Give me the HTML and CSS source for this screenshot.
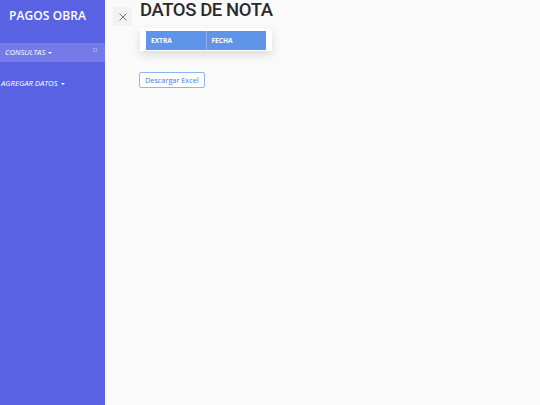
FILE: index.html
```html
<!DOCTYPE html>
<html>
<head>
<meta charset="utf-8">
<link rel="stylesheet" href="styles.css">
</head>
<body>
<div class="app">
  <aside class="sidebar">
    <div class="brand">PAGOS OBRA</div>
    <div class="nav-item active">CONSULTAS <span class="caret"></span><span class="dot"></span></div>
    <div class="nav-item second">AGREGAR DATOS <span class="caret"></span></div>
  </aside>
  <main class="content">
    <div class="close"><svg width="8" height="8" viewBox="0 0 8 8"><path d="M0.5 0.5L7.5 7.5M7.5 0.5L0.5 7.5" stroke="#666" stroke-width="0.9" fill="none"/></svg></div>
    <div class="body">
      <h1 class="title">DATOS DE NOTA</h1>
      <div class="card">
        <table class="tbl">
          <thead><tr><th>EXTRA</th><th>FECHA</th></tr></thead>
        </table>
      </div>
      <button class="btn">Descargar Excel</button>
    </div>
  </main>
</div>
</body>
</html>
```
FILE: styles.css
```css
* { box-sizing: border-box; }
html, body { margin: 0; height: 100%; }
body { font-family: "Open Sans", "DejaVu Sans", sans-serif; background: #fafafa; }
.app { display: flex; height: 405px; }
.sidebar { width: 105px; background: #5a62e4; color: #fff; flex-shrink: 0; }
.brand { font-size: 12px; font-weight: 600; padding: 7px 0 0 9px; height: 43px; letter-spacing: 0.1px; }
.nav-item { font-size: 7.7px; font-style: italic; position: relative; }
.nav-item.active { background: rgba(255,255,255,0.16); height: 19px; line-height: 19px; padding-left: 5px; }
.nav-item.second { padding-left: 1px; margin-top: 14px; line-height: 14px; }
.caret { display: inline-block; width: 0; height: 0; border-left: 2px solid transparent; border-right: 2px solid transparent; border-top: 2.5px solid #fff; vertical-align: middle; margin-left: 1px; }
.dot { position: absolute; right: 8px; top: 5px; width: 4px; height: 4px; border: 1px solid rgba(255,255,255,0.3); }
.content { flex: 1; display: flex; align-items: flex-start; }
.close { width: 19px; height: 19px; margin: 7px 0 0 8px; background: #f2f2f2; display: flex; align-items: center; justify-content: center; }
.close svg { display: block; }
.body { padding-left: 8px; }
.title { margin: 0; font-family: "Roboto", "Open Sans", sans-serif; font-size: 18.5px; font-weight: 500; color: #2a2a2a; line-height: 21px; letter-spacing: -0.4px; }
.card { margin-top: 7px; width: 132px; background: #fff; padding: 3px 6px 1px; box-shadow: 0 4px 10px rgba(0,0,0,0.12); }
.tbl { border-collapse: collapse; width: 120px; }
.tbl th { background: #6094e8; color: #fff; font-size: 6.6px; font-weight: 700; text-align: left; padding: 0 5px; height: 19px; width: 60px; }
.tbl th + th { border-left: 1px solid #8fb3ef; }
.btn { display: block; margin-top: 21px; margin-left: -1px; font-family: inherit; font-size: 7.3px; color: #3b7ce0; background: #fff; border: 1px solid #8cb5ef; border-radius: 2px; padding: 0 5px; height: 16px; }
```
